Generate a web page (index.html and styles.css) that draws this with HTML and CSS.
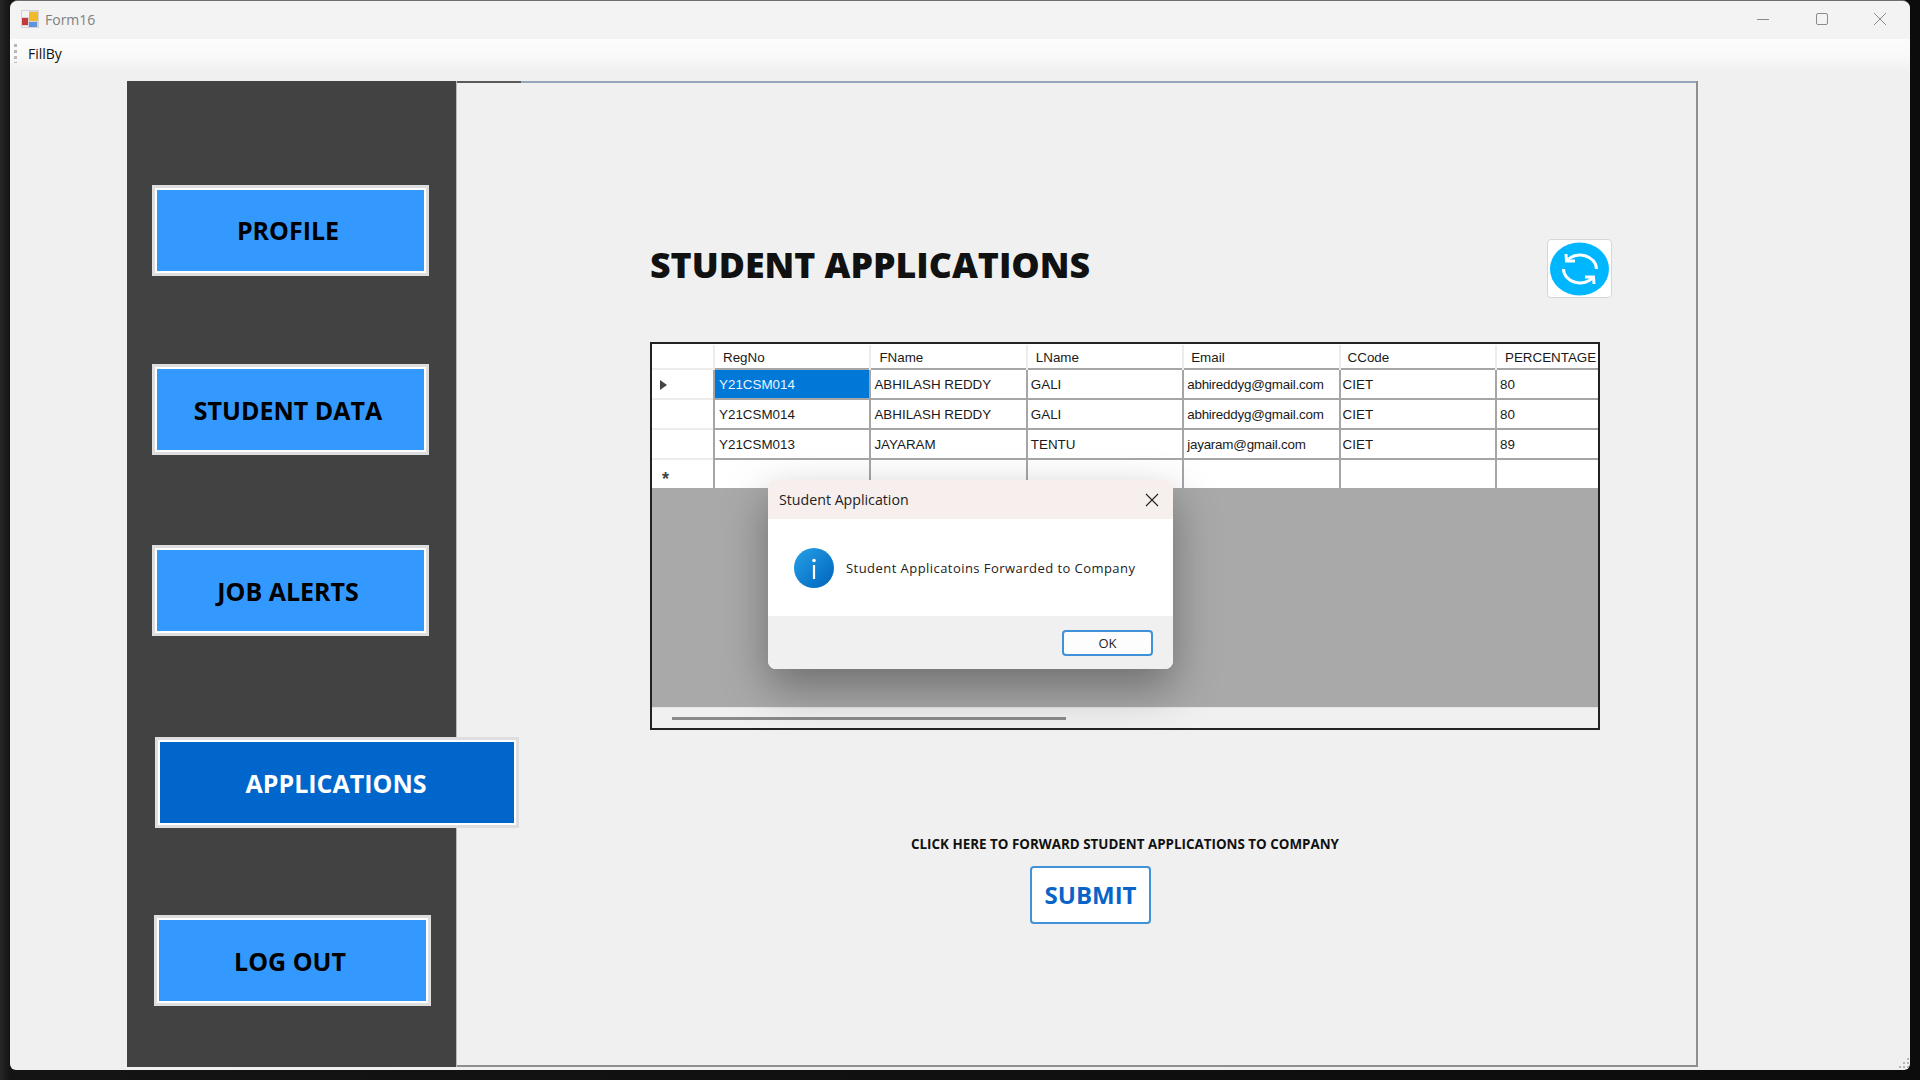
FILE: index.html
```html
<!DOCTYPE html>
<html lang="en">
<head>
    <meta charset="UTF-8">
    <title>Form16</title>
    <link rel="stylesheet" href="styles.css">
</head>
<body>
    <div class="window">
        <div class="titlebar">
            <svg class="app-icon" width="18" height="18" viewBox="0 0 18 18">
                <rect width="18" height="18" fill="#d4d4d4"/>
                <rect x="1" y="1" width="7" height="6" fill="#f4f4f4"/>
                <rect x="8" y="2" width="9" height="9" fill="#f2b92c"/>
                <rect x="1" y="8" width="6" height="7" fill="#c43a3a"/>
                <rect x="8" y="12" width="8" height="5" fill="#5f92e0"/>
                <rect x="1" y="16" width="6" height="1" fill="#f4f4f4"/>
            </svg>
            <span class="app-name">Form16</span>
            <div class="window-controls">
                <svg width="14" height="14" viewBox="0 0 14 14"><path d="M1 7.5H13" stroke="#8a8a8a" fill="none"/></svg>
                <svg width="14" height="14" viewBox="0 0 14 14"><rect x="1.5" y="1.5" width="11" height="11" rx="1.5" stroke="#8a8a8a" fill="none"/></svg>
                <svg width="14" height="14" viewBox="0 0 14 14"><path d="M1 1L13 13M13 1L1 13" stroke="#8a8a8a" fill="none"/></svg>
            </div>
        </div>

        <div class="menubar">
            <span class="grip"></span>
            <span class="menu-item">FillBy</span>
        </div>

        <div class="window-body">
            <div class="frame">
                <div class="sidebar">
                    <button class="nav-btn first">PROFILE</button>
                    <button class="nav-btn gap-88">STUDENT DATA</button>
                    <button class="nav-btn gap-90">JOB ALERTS</button>
                    <button class="nav-btn active">APPLICATIONS</button>
                    <button class="nav-btn last">LOG OUT</button>
                </div>

                <div class="content">
                    <div class="top-line"></div>
                    <div class="head">
                        <h1>STUDENT APPLICATIONS</h1>
                        <button class="refresh">
                            <svg width="63" height="57" viewBox="1 1 63 57">
                                <ellipse cx="32.5" cy="30" rx="29.5" ry="26.5" fill="#00b7ff"/>
                                <g fill="none" stroke="#fff" stroke-width="3">
                                    <path d="M19.5 22A16.5 14 0 0 1 49.5 30"/>
                                    <path d="M19 15L19.5 22L28 22"/>
                                    <path d="M16.5 30A16.5 14 0 0 0 46.5 38"/>
                                    <path d="M38 38L46.5 38L47 45"/>
                                </g>
                            </svg>
                        </button>
                    </div>

                    <div class="grid-box">
                        <table class="grid">
                            <colgroup>
                                <col class="col-head">
                                <col class="col-data"><col class="col-data"><col class="col-data">
                                <col class="col-data"><col class="col-data"><col>
                            </colgroup>
                            <thead>
                                <tr>
                                    <th></th>
                                    <th>RegNo</th>
                                    <th>FName</th>
                                    <th>LName</th>
                                    <th class="tight">Email</th>
                                    <th class="tight">CCode</th>
                                    <th class="last-head">PERCENTAGE</th>
                                </tr>
                            </thead>
                            <tbody>
                                <tr>
                                    <td class="row-head"><span class="arrow"></span></td>
                                    <td class="selected reg">Y21CSM014</td>
                                    <td>ABHILASH REDDY</td>
                                    <td>GALI</td>
                                    <td class="email">abhireddyg@gmail.com</td>
                                    <td class="code">CIET</td>
                                    <td>80</td>
                                </tr>
                                <tr>
                                    <td class="row-head"></td>
                                    <td class="reg">Y21CSM014</td>
                                    <td>ABHILASH REDDY</td>
                                    <td>GALI</td>
                                    <td class="email">abhireddyg@gmail.com</td>
                                    <td class="code">CIET</td>
                                    <td>80</td>
                                </tr>
                                <tr>
                                    <td class="row-head"></td>
                                    <td class="reg">Y21CSM013</td>
                                    <td>JAYARAM</td>
                                    <td>TENTU</td>
                                    <td class="email">jayaram@gmail.com</td>
                                    <td class="code">CIET</td>
                                    <td>89</td>
                                </tr>
                                <tr>
                                    <td class="row-head star">*</td>
                                    <td></td><td></td><td></td><td></td><td></td><td></td>
                                </tr>
                            </tbody>
                        </table>
                        <div class="grid-empty"></div>
                        <div class="h-scroll"><span class="h-thumb"></span></div>
                    </div>

                    <p class="forward-label">CLICK HERE TO FORWARD STUDENT APPLICATIONS TO COMPANY</p>
                    <button class="submit">SUBMIT</button>

                    <div class="dialog">
                        <div class="dialog-title">
                            <span>Student Application</span>
                            <svg width="14" height="14" viewBox="0 0 14 14"><path d="M1 1L13 13M13 1L1 13" stroke="#222" stroke-width="1.1" fill="none"/></svg>
                        </div>
                        <div class="dialog-body">
                            <svg width="40" height="40" viewBox="0 0 40 40">
                                <defs>
                                    <linearGradient id="info" x1="0" y1="0" x2="1" y2="1">
                                        <stop offset="0" stop-color="#26a1e6"/>
                                        <stop offset="1" stop-color="#0063bd"/>
                                    </linearGradient>
                                </defs>
                                <circle cx="20" cy="20" r="20" fill="url(#info)"/>
                                <circle cx="20" cy="12.5" r="1.8" fill="#fff"/>
                                <rect x="18.9" y="17" width="2.2" height="14" fill="#fff"/>
                            </svg>
                            <span class="dialog-msg">Student Applicatoins Forwarded to Company</span>
                        </div>
                        <div class="dialog-foot">
                            <button class="ok">OK</button>
                        </div>
                    </div>
                </div>
            </div>
        </div>

        <svg class="resize-grip" width="12" height="12" viewBox="0 0 12 12" fill="#b5b5b5">
            <rect x="9" y="0" width="2" height="2"/>
            <rect x="5" y="4" width="2" height="2"/><rect x="9" y="4" width="2" height="2"/>
            <rect x="1" y="8" width="2" height="2"/><rect x="5" y="8" width="2" height="2"/><rect x="9" y="8" width="2" height="2"/>
        </svg>
    </div>
</body>
</html>
```

FILE: styles.css
```css
/* Form16 window */
* {
    box-sizing: border-box;
}
body {
    margin: 0;
    height: 1080px;
    padding: 0 10px 10px 10px;
    background: linear-gradient(to right, #262626 0, #141414 10px, #0c0c0c 100%);
    font-family: "Open Sans", sans-serif;
    overflow: hidden;
}
button {
    font-family: "Open Sans", sans-serif;
    cursor: pointer;
}
.window {
    position: relative;
    height: 100%;
    display: flex;
    flex-direction: column;
    background-color: #f0f0f0;
    border-top: 1px solid #6e6e6e;
    border-radius: 8px 8px 6px 6px;
    overflow: hidden;
}

/* title and menu */
.titlebar {
    height: 38px;
    display: flex;
    align-items: center;
    padding: 0 0 2px 11px;
    background-color: #f3f3f3;
}
.app-name {
    margin-left: 6px;
    font-size: 14px;
    color: #808080;
}
.window-controls {
    margin-left: auto;
    display: flex;
    gap: 44.5px;
    padding-right: 23px;
}
.menubar {
    height: 33px;
    display: flex;
    align-items: center;
    padding: 0 0 4px 4px;
    background: linear-gradient(to bottom, #fcfcfc, #f9f9f9 50%, #f0f0f0);
}
.grip {
    width: 3px;
    height: 19px;
    background: repeating-linear-gradient(to bottom, #b8b8b8 0 3px, transparent 3px 6px);
}
.menu-item {
    margin-left: 11px;
    font-size: 14px;
    color: #111;
}
.window-body {
    flex: 1;
    padding: 9px 0 0 117px;
}
.frame {
    display: flex;
    width: 1571px;
    height: 986px;
}

/* left nav */
.sidebar {
    position: relative;
    z-index: 1;
    flex: 0 0 330px;
    min-width: 0;
    height: 986px;
    display: flex;
    flex-direction: column;
    align-items: flex-start;
    padding: 104px 0 0 25px;
    background-color: #424242;
    border-right: 1px solid #b9b9b9;
}
.nav-btn {
    flex: none;
    width: 277px;
    height: 91px;
    padding: 0 5px 0 0;
    background-color: #3399ff;
    border: 3px solid #dedede;
    box-shadow: inset 0 0 0 2px #fff;
    font-size: 25px;
    font-weight: 700;
    color: #000;
}
.nav-btn.first {
    padding-bottom: 1px;
}
.gap-88 {
    margin-top: 88px;
}
.gap-90 {
    margin-top: 90px;
}
.nav-btn.active {
    width: 364px;
    margin: 101px 0 0 3px;
    padding-right: 2px;
    background-color: #0066cc;
    color: #fff;
}
.nav-btn.last {
    margin: 87px 0 0 2px;
}

/* main area */
.content {
    position: relative;
    flex: 1;
    min-width: 0;
    display: flex;
    flex-direction: column;
    padding: 0 0 0 193px;
    border-right: 2px solid #8f8f8f;
    border-bottom: 2px solid #8f8f8f;
}
.top-line {
    height: 2px;
    margin-left: -193px;
    background: linear-gradient(to right, #5a5a5a 64px, #98a8bc 64px);
}
.head {
    display: flex;
    justify-content: space-between;
    align-items: flex-start;
    width: 962px;
    margin-top: 156px;
    height: 59px;
}
h1 {
    margin: 0;
    font-size: 35.7px;
    line-height: 51px;
    font-weight: 800;
    color: #111;
}
.refresh {
    width: 65px;
    height: 59px;
    padding: 0;
    display: flex;
    align-items: center;
    justify-content: center;
    background-color: #fff;
    border: 1px solid #d6d6d6;
    border-radius: 4px;
}

/* data grid */
.grid-box {
    width: 950px;
    height: 388px;
    margin-top: 44px;
    display: flex;
    flex-direction: column;
    padding-top: 1px;
    background-color: #fff;
    border: 2px solid #222;
}
.grid {
    width: 946px;
    table-layout: fixed;
    border-collapse: collapse;
    font-family: "Liberation Sans", Arial, sans-serif;
    font-size: 13.4px;
    color: #1a1a1a;
}
.col-head {
    width: 62px;
}
.col-data {
    width: 156.4px;
}
.grid th {
    height: 24px;
    padding: 1px 0 0 8px;
    font-weight: 400;
    text-align: left;
    border-right: 2px solid #ececec;
}
.grid .tight {
    padding-left: 7px;
}
.grid .last-head {
    border-right: 0;
    white-space: nowrap;
}
.grid td {
    height: 30px;
    padding: 1px 0 0 3px;
    border-top: 2px solid #a6a6a6;
    border-right: 2px solid #a6a6a6;
    white-space: nowrap;
}
.grid .reg {
    padding-left: 4px;
}
.grid .code {
    padding-left: 2px;
}
.grid .email {
    letter-spacing: -0.22px;
}
.grid td:last-child {
    border-right: 0;
}
.grid tbody tr:last-child td {
    height: 29px;
}
.grid .row-head {
    padding-left: 8px;
    border-top: 2px solid #ececec;
}
.grid .selected {
    background-color: #0078d7;
    color: #e8f3ff;
}
.arrow {
    display: block;
    width: 0;
    height: 0;
    border-left: 7px solid #444;
    border-top: 5.5px solid transparent;
    border-bottom: 5.5px solid transparent;
}
.grid .star {
    padding: 9px 0 0 10px;
    font-size: 18px;
    line-height: 18px;
    font-weight: 700;
    color: #444;
}
.grid-empty {
    flex: 1;
    background-color: #a9a9a9;
}
.h-scroll {
    height: 21px;
    display: flex;
    align-items: center;
    padding-left: 20px;
    background-color: #f0f0f0;
    border-top: 1px solid #e4e4e4;
}
.h-thumb {
    width: 394px;
    height: 3px;
    background-color: #8a8a8a;
}

/* forward action */
.forward-label {
    width: 950px;
    margin: 104px 0 0;
    text-align: center;
    font-size: 13.4px;
    line-height: 20px;
    font-weight: 700;
    color: #111;
}
.submit {
    width: 121px;
    height: 58px;
    margin: 12px 0 0 380px;
    padding: 0 0 1px;
    background-color: #fff;
    border: 2px solid #3f92d8;
    border-radius: 4px;
    font-size: 24px;
    font-weight: 700;
    color: #0a64c8;
}

/* message box */
.dialog {
    position: absolute;
    left: 311px;
    top: 399px;
    z-index: 2;
    width: 405px;
    height: 189px;
    display: flex;
    flex-direction: column;
    border-radius: 8px;
    overflow: hidden;
    background-color: #fff;
    box-shadow: 0 18px 45px rgba(0, 0, 0, 0.35);
}
.dialog-title {
    height: 39px;
    display: flex;
    align-items: center;
    justify-content: space-between;
    padding: 0 14px 0 11px;
    background-color: #f7efed;
    font-size: 14.2px;
    color: #222;
}
.dialog-body {
    height: 97px;
    display: flex;
    align-items: center;
    gap: 12px;
    padding: 0 0 0 26px;
    font-size: 13px;
    letter-spacing: 0.45px;
    color: #222;
}
.dialog-foot {
    flex: 1;
    display: flex;
    align-items: flex-start;
    justify-content: flex-end;
    padding: 14px 20px 0 0;
    background-color: #f0f0f0;
}
.ok {
    width: 91px;
    height: 26px;
    padding: 0;
    background-color: #fdfdfd;
    border: 2px solid #3f92d8;
    border-radius: 4px;
    font-size: 13px;
    color: #222;
}

/* bottom right corner */
.resize-grip {
    position: absolute;
    right: 0;
    bottom: 0;
}
```
